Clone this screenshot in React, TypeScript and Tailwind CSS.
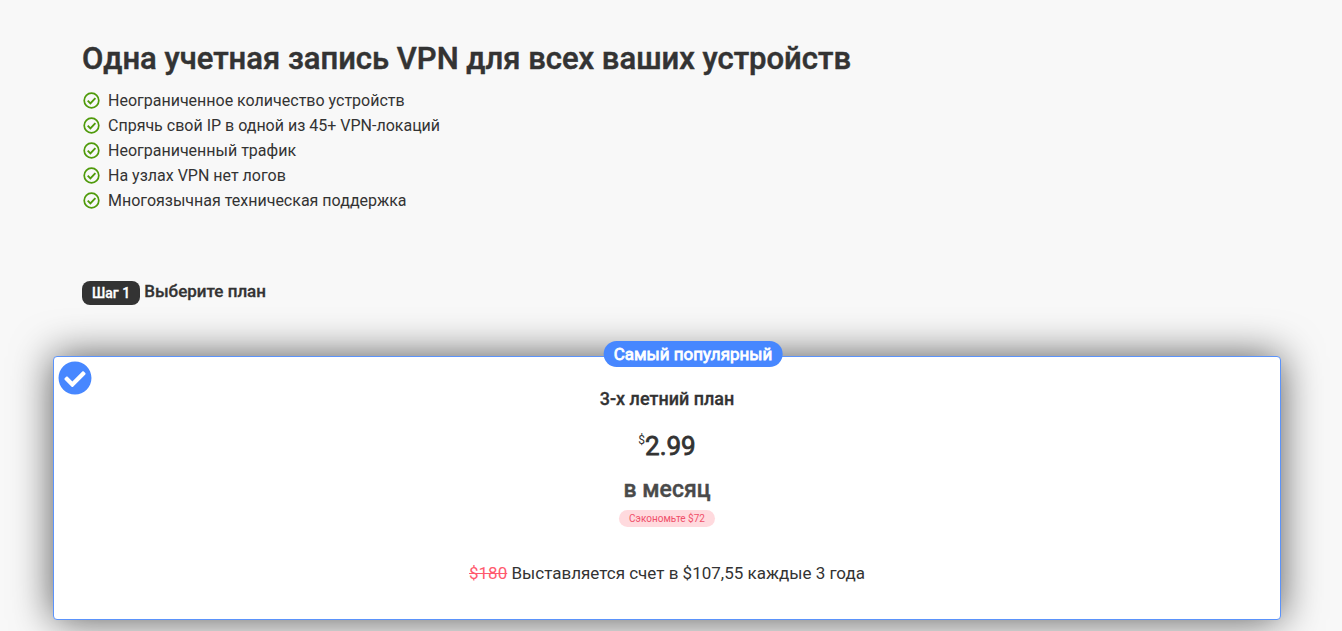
import { FaCheckCircle } from "react-icons/fa";

const features = [
  "Неограниченное количество устройств",
  "Спрячь свой IP в одной из 45+ VPN-локаций",
  "Неограниченный трафик",
  "На узлах VPN нет логов",
  "Многоязычная техническая поддержка",
];

function FeatureIcon() {
  return (
    <svg viewBox="0 0 18 18" className="h-[18px] w-[18px] shrink-0" fill="none" stroke="#4f9a0a" aria-hidden="true">
      <circle cx="9.5" cy="8.5" r="7.3" strokeWidth="1.7" />
      <path d="M5.7 8.6l2.7 2.7 5-5.2" strokeWidth="1.9" />
    </svg>
  );
}

function Intro() {
  return (
    <section className="px-[29px]">
      <h1 className="text-[31px] leading-[38px] font-medium [-webkit-text-stroke:0.5px_#333]">
        Одна учетная запись VPN для всех ваших устройств
      </h1>
      <ul className="mt-[10px]">
        {features.map((feature) => (
          <li key={feature} className="flex items-center gap-2 leading-[25px]">
            <FeatureIcon />
            {feature}
          </li>
        ))}
      </ul>
    </section>
  );
}

function PlanCard() {
  return (
    <label className="relative flex cursor-pointer flex-col items-center rounded border border-[#5b93fb] bg-white pt-7 pb-8 shadow-[0_0_40px_rgba(0,0,0,0.66)]">
      <input type="radio" name="plan" defaultChecked className="sr-only" />
      <FaCheckCircle className="absolute top-1 left-1 h-[34px] w-[34px] text-[#4787ff]" />
      <span className="absolute -top-4 left-1/2 ml-[26px] -translate-x-1/2 rounded-full bg-[#4787ff] px-[10px] text-[17px] leading-[26px] whitespace-nowrap text-white [-webkit-text-stroke:0.8px_#fff]">
        Самый популярный
      </span>
      <span className="text-lg leading-7 font-medium [-webkit-text-stroke:0.3px_#333]">3-х летний план</span>
      <span className="mt-[17px] flex items-start text-[26px] leading-8">
        <span className="text-xs leading-5">$</span>
        <span className="[-webkit-text-stroke:0.8px_#333]">2.99</span>
      </span>
      <span className="mt-3 text-[23px] leading-8 font-medium text-[#4a4a4a] [-webkit-text-stroke:0.4px_#4a4a4a]">
        в месяц
      </span>
      <span className="mt-1 rounded-full bg-[#ffdade] px-[10px] text-[10px] leading-[17px] text-[#f0506a]">
        Сэкономьте $72
      </span>
      <span className="mt-8 text-[17px] leading-7">
        <s className="text-[#ff5a6e]">$180</s> Выставляется счет в $107,55 каждые 3 года
      </span>
    </label>
  );
}

export default function App() {
  return (
    <main className="min-h-screen overflow-hidden bg-[#f8f8f8] pt-10 pr-[61px] pb-3 pl-[53px] font-['Roboto',sans-serif] text-[#333]">
      <Intro />
      <h2 className="mt-[68px] flex items-start gap-1 px-[29px] text-[17px] leading-5 font-medium [-webkit-text-stroke:0.3px_#333]">
        <span className="rounded-lg bg-[#333] px-[10px] text-sm leading-6 text-white [-webkit-text-stroke:0.3px_#fff]">
          Шаг 1
        </span>
        Выберите план
      </h2>
      <div className="mt-[51px]">
        <PlanCard />
      </div>
    </main>
  );
}
